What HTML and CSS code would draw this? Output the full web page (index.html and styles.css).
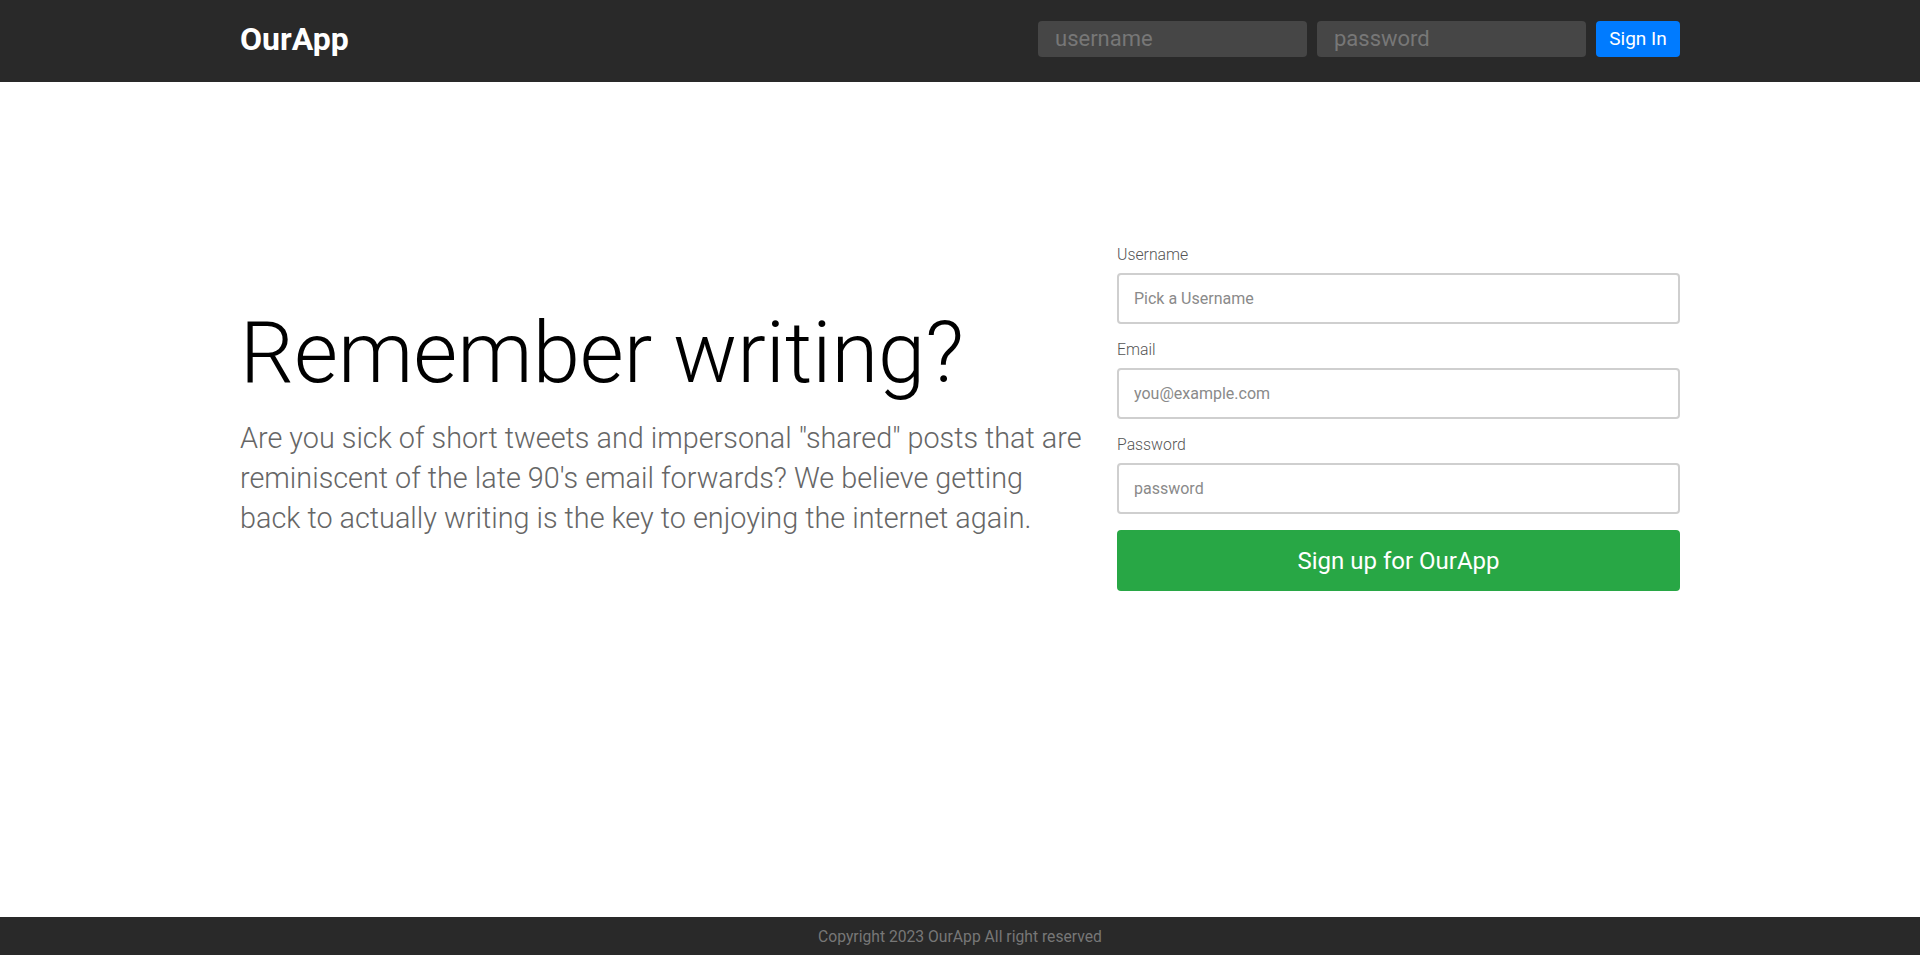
FILE: index.html
```html
<!DOCTYPE html>
<html lang="en">
<head>
<meta charset="utf-8">
<title>OurApp</title>
<link rel="stylesheet" href="styles.css">
</head>
<body>
<header class="header-bar">
  <div class="container header-inner">
    <h4 class="logo"><a href="#">OurApp</a></h4>
    <form class="header-form">
      <input class="header-input" type="text" placeholder="username">
      <input class="header-input" type="password" placeholder="password">
      <button class="btn-signin" type="button">Sign In</button>
    </form>
  </div>
</header>
<main class="main">
  <div class="container hero">
    <div class="hero-text">
      <h1 class="display">Remember writing?</h1>
      <p class="lead">Are you sick of short tweets and impersonal "shared" posts that are reminiscent of the late 90's email forwards? We believe getting back to actually writing is the key to enjoying the internet again.</p>
    </div>
    <form class="register">
      <div class="form-group">
        <label class="field-label" for="u">Username</label>
        <input id="u" class="form-control" type="text" placeholder="Pick a Username">
      </div>
      <div class="form-group">
        <label class="field-label" for="e">Email</label>
        <input id="e" class="form-control" type="text" placeholder="you@example.com">
      </div>
      <div class="form-group">
        <label class="field-label" for="p">Password</label>
        <input id="p" class="form-control" type="password" placeholder="password">
      </div>
      <button class="btn-signup" type="button">Sign up for OurApp</button>
    </form>
  </div>
</main>
<footer class="footer">
  <p class="copyright">Copyright 2023 OurApp All right reserved</p>
</footer>
</body>
</html>
```

FILE: styles.css
```css
* { box-sizing: border-box; }
html, body { margin: 0; padding: 0; height: 100%; }
body {
  font-family: Roboto, "Liberation Sans", Arial, sans-serif;
  color: #212529;
  background: #fff;
  display: flex;
  flex-direction: column;
  min-height: 955px;
}
.container {
  width: 1440px;
  margin: 0 auto;
}
.header-bar {
  background: #292929;
  height: 82px;
  flex: 0 0 auto;
}
.header-inner {
  height: 100%;
  display: flex;
  align-items: center;
  justify-content: space-between;
  padding-bottom: 5px;
}
.logo {
  margin: 0;
  font-size: 32px;
  font-weight: 700;
  line-height: 1;
}
.logo a { color: #fff; text-decoration: none; }
.header-form {
  display: flex;
  gap: 10px;
  align-items: center;
}
.header-input {
  width: 269px;
  height: 36px;
  border: none;
  border-radius: 4px;
  background: #464646;
  padding: 0 17px;
  font-family: Roboto, sans-serif;
  font-size: 22px;
  color: #fff;
}
.header-input::placeholder { color: #777; }
.btn-signin {
  height: 36px;
  width: 84px;
  border: none;
  border-radius: 4px;
  background: #007bff;
  color: #fff;
  font-family: Roboto, sans-serif;
  font-size: 19px;
  padding: 0;
}
.main {
  flex: 1 1 auto;
  padding-top: 162px;
}
.hero {
  display: flex;
  align-items: center;
  justify-content: space-between;
}
.hero-text {
  width: 843px;
  padding-top: 4px;
}
.display {
  margin: 0 0 14px;
  font-size: 85px;
  font-weight: 300;
  line-height: 1.2;
  color: #000;
}
.lead {
  margin: 0;
  font-size: 28.8px;
  font-weight: 300;
  line-height: 40px;
  color: #666;
}
.register {
  width: 563px;
}
.form-group {
  margin-bottom: 15px;
}
.field-label {
  display: block;
  font-size: 15.8px;
  font-weight: 300;
  color: #555;
  line-height: 21px;
  margin-bottom: 8px;
}
.form-control {
  display: block;
  width: 100%;
  height: 51px;
  border: 2px solid #cfcfcf;
  border-radius: 4px;
  padding: 0 15px;
  font-family: Roboto, sans-serif;
  font-size: 16px;
  color: #495057;
  background: #fff;
}
.form-control::placeholder { color: #8a8a8a; }
.btn-signup {
  display: block;
  width: 100%;
  height: 61px;
  margin-top: 16px;
  border: none;
  border-radius: 4px;
  background: #28a745;
  color: #fff;
  font-family: Roboto, sans-serif;
  font-size: 24px;
}
.form-group:last-of-type { margin-bottom: 0; }
.footer {
  background: #292929;
  height: 38px;
  flex: 0 0 auto;
  display: flex;
  align-items: center;
  justify-content: center;
}
.copyright {
  margin: 0;
  font-size: 15.7px;
  color: #777;
}
```
